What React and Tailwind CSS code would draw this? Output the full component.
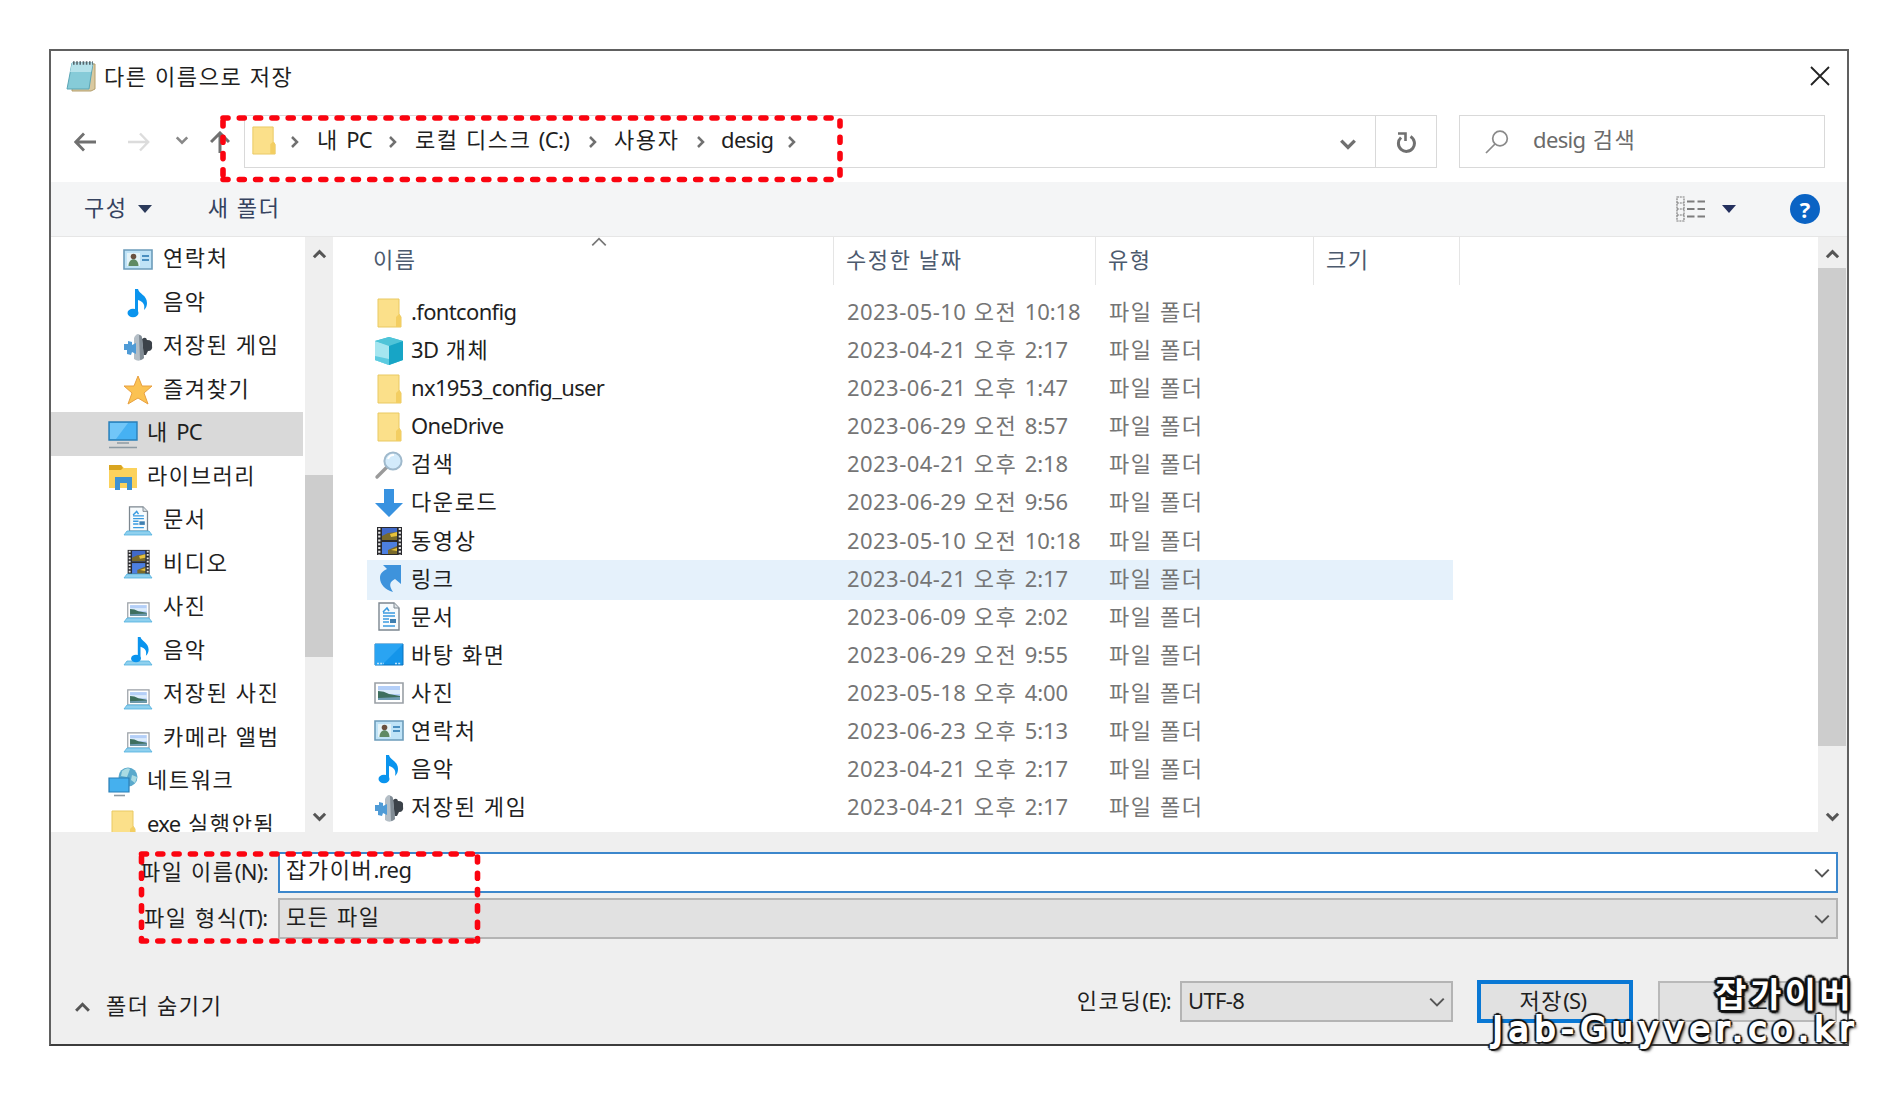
import React from 'react';

// Hangul, numbers and latin words are spaced differently in the dialog font
function Label({ children, className = '' }) {
  const runs = children.match(/[\uac00-\ud7a3 ]+|[\d:-]{3,}|[^\uac00-\ud7a3 ]+/g) || [];
  return (
    <span className={`flex items-baseline whitespace-pre text-[22px] leading-[30px] ${className}`}>
      {runs.map((run, i) => {
        let style = 'tracking-[-0.65px]';
        if (/[\uac00-\ud7a3 ]/.test(run)) style = 'tracking-[1.6px]';
        else if (/^[\d:-]+$/.test(run)) style = run.length > 6 ? 'tracking-[0.45px]' : 'tracking-[-0.1px]';
        return <span key={i} className={style}>{run}</span>;
      })}
    </span>
  );
}

function Chevron({ dir = 'down', size = 16, width = 2.5, color = '#555' }) {
  const paths = {
    down: 'M2 5l6 6 6-6',
    up: 'M2 11l6-6 6 6',
    right: 'M5 3l5 5-5 5',
  };
  return (
    <svg width={size} height={size} viewBox="0 0 16 16" fill="none" stroke={color} strokeWidth={width} className="shrink-0">
      <path d={paths[dir]} />
    </svg>
  );
}

const Laptop = () => <path d="M4 25h22l3 4H1z" fill="#8fd0ee" stroke="#4fb0de" strokeWidth="0.8" />;

const Doc = () => (
  <>
    <path d="M5 1h15l5 5v22H5z" fill="#f7fbfd" stroke="#7c8790" strokeWidth="1.4" />
    <path d="M20 1v5h5" fill="#dde3e7" stroke="#7c8790" />
    <path d="M9 10l4-4 2 3M9 11h12M9 14h12M9 17h6M9 20h6M9 24h12" stroke="#3a9be0" strokeWidth="1.6" fill="none" />
    <path d="M16 17h6v4h-6z" fill="#3f7fb0" />
  </>
);

const Film = () => (
  <>
    <path d="M3 1h25v28H3z" fill="#2a2a2e" />
    <path d="M8 2h15v12H8z" fill="#4169c8" />
    <path d="M8 16h15v12H8z" fill="#4d7fe0" />
    <path d="M8 10l6-3 9-1v8H8zM14 24l9-4v8h-9z" fill="#7a6a2a" />
    <path d="M16 8l7-2v4l-6 1zM17 24l6-2v3z" fill="#e8c23c" />
    <path d="M5.3 2v27M25.8 2v27" stroke="#e6e6e6" strokeWidth="2.2" strokeDasharray="2 1.8" />
  </>
);

const Photo = () => (
  <>
    <path d="M1 5h28v20H1z" fill="#fff" stroke="#9aa0a6" strokeWidth="1.6" />
    <path d="M4 8h22v14H4z" fill="#b4cff8" />
    <path d="M4 12h22v4H4z" fill="#dcecfb" />
    <path d="M4 13q6 0 11 3l11 2v4H4z" fill="#3e6f5e" />
    <path d="M4 20l22-1v3H4z" fill="#6f9cb4" />
  </>
);

const Note = () => (
  <>
    <ellipse cx="10" cy="25" rx="5.5" ry="4.2" fill="#0a94ee" />
    <path d="M12 1h3c1 5 9 6 9 14 0 3-1 5-3 7 1-5 0-8-6-10v13h-3z" fill="#0a94ee" />
  </>
);

const GLYPHS = {
  folder: (
    <>
      <path d="M4 1h21v15l2 3v10H4z" fill="#fbe08a" stroke="#e9c963" strokeWidth="1" />
      <path d="M25 16l2 3v10h-5V19z" fill="#f3ce62" />
    </>
  ),
  cube: (
    <>
      <path d="M15 1l14 4v19l-14 5L1 24V5z" fill="#35bdd6" />
      <path d="M1 5l14 4v20L1 24z" fill="#a5e6f0" />
      <path d="M1 20l14 3v6L1 24z" fill="#5ccbe0" />
      <path d="M15 9l14-4v19l-14 5z" fill="#17a5c6" />
      <path d="M1 5l14-4 14 4-14 5z" fill="#4fc4d8" />
    </>
  ),
  search: (
    <>
      <path d="M3 27l10-10" stroke="#9a9a9a" strokeWidth="3.4" strokeLinecap="round" />
      <circle cx="19" cy="11" r="8.6" fill="#d3ebfb" stroke="#9fb9cc" strokeWidth="2" />
      <path d="M14 9a6 6 0 0 1 6-4" stroke="#fff" strokeWidth="2" fill="none" />
    </>
  ),
  download: <path d="M10 1h10v14h9L15 29 1 15h9z" fill="#3892e0" />,
  film: <Film />,
  link: <path d="M9 1h18v19l-6-5c-6 3-6 7-2 13-8-2-13-8-13-14 0-5 3-7 7-9z" fill="#3e93dc" />,
  doc: <Doc />,
  desktop: (
    <>
      <path d="M1 4h28v21H1z" fill="#1495ea" stroke="#0b72bd" />
      <path d="M1 4h28L8 25H1z" fill="#2aa4f2" />
      <path d="M3 23.5h7M21 23.5h6" stroke="#bfe2fa" strokeWidth="1.5" strokeDasharray="2 1.2" />
    </>
  ),
  photo: <Photo />,
  contact: (
    <>
      <path d="M1 5h28v19H1z" fill="#bfe3f7" stroke="#6c9cba" strokeWidth="1.6" />
      <path d="M4 8h13v13H4z" fill="#e4f3f8" />
      <circle cx="10.5" cy="11.5" r="2.8" fill="#6a5140" />
      <path d="M5.5 21c0-9 10-9 10 0z" fill="#5f8a64" />
      <path d="M19 11h7M19 15h7" stroke="#4a8fc0" strokeWidth="1.8" />
    </>
  ),
  note: <Note />,
  game: (
    <>
      <path d="M19 7q4-3 5 1 6 0 5 5 1 6-4 6l-2 4h-6V8z" fill="#3b4249" />
      <path d="M11 6q4-8 8 0l2 20q-5 5-10 1z" fill="#b4bec6" />
      <path d="M16 3q3 0 3 3l2 20q-2 2-4 2z" fill="#808b94" />
      <path d="M1 12h4V9l4 1v3l4-2v11l-4-2-1 3-4-1v-4H1z" fill="#4f9bd6" />
    </>
  ),
  star: <path d="M15 1l4 10h10l-8 7 4 11-10-6-10 6 4-11-8-7h10z" fill="#fbc252" stroke="#e8a040" strokeWidth="1" />,
  pc: (
    <>
      <path d="M1 3h28v18H1z" fill="#46b1f3" stroke="#2a7fb8" strokeWidth="1.4" />
      <path d="M2 4h18L8 20H2z" fill="#71c6f8" />
      <path d="M9 24h12M1 28.5h28" stroke="#8d9aa3" strokeWidth="1.4" />
    </>
  ),
  library: (
    <>
      <path d="M1 3h12l3 3h13v20H1z" fill="#fbd25c" />
      <path d="M1 3h12l2 3-2 2H1z" fill="#d9a520" />
      <path d="M7 28V15h17v13h-5v-7h-7v7z" fill="#3d92d2" />
    </>
  ),
  laptopDoc: <><g transform="translate(2 0) scale(.9)"><Doc /></g><Laptop /></>,
  laptopFilm: <><g transform="translate(2 0) scale(.88)"><Film /></g><Laptop /></>,
  laptopPhoto: <><g transform="translate(4 6) scale(.76)"><Photo /></g><Laptop /></>,
  laptopNote: <><Laptop /><g transform="translate(4 0) scale(.9)"><Note /></g></>,
  network: (
    <>
      <circle cx="20" cy="10" r="9.5" fill="#5aa9cc" />
      <path d="M14 4q5-4 8-2l-3 8-6-1zM24 8l5 2-2 6-4-3z" fill="#a9dbe3" />
      <path d="M1 11h20v14H1z" fill="#45b0ee" stroke="#2b7fb6" strokeWidth="1.2" />
      <path d="M6 28.5h11" stroke="#8d9aa3" strokeWidth="1.6" />
    </>
  ),
};

function Icon({ name, size = 30, className = '' }) {
  return (
    <svg width={size} height={size} viewBox="0 0 30 30" className={`shrink-0 ${className}`}>
      {GLYPHS[name]}
    </svg>
  );
}

const TREE = [
  { icon: 'contact', label: '연락처', level: 2 },
  { icon: 'note', label: '음악', level: 2 },
  { icon: 'game', label: '저장된 게임', level: 2 },
  { icon: 'star', label: '즐겨찾기', level: 2 },
  { icon: 'pc', label: '내 PC', level: 1, selected: true },
  { icon: 'library', label: '라이브러리', level: 1 },
  { icon: 'laptopDoc', label: '문서', level: 2 },
  { icon: 'laptopFilm', label: '비디오', level: 2 },
  { icon: 'laptopPhoto', label: '사진', level: 2 },
  { icon: 'laptopNote', label: '음악', level: 2 },
  { icon: 'laptopPhoto', label: '저장된 사진', level: 2 },
  { icon: 'laptopPhoto', label: '카메라 앨범', level: 2 },
  { icon: 'network', label: '네트워크', level: 1 },
  { icon: 'folder', label: 'exe 실행안됨', level: 1 },
];

const FILES = [
  ['folder', '.fontconfig', '2023-05-10 오전 10:18'],
  ['cube', '3D 개체', '2023-04-21 오후 2:17'],
  ['folder', 'nx1953_config_user', '2023-06-21 오후 1:47'],
  ['folder', 'OneDrive', '2023-06-29 오전 8:57'],
  ['search', '검색', '2023-04-21 오후 2:18'],
  ['download', '다운로드', '2023-06-29 오전 9:56'],
  ['film', '동영상', '2023-05-10 오전 10:18'],
  ['link', '링크', '2023-04-21 오후 2:17'],
  ['doc', '문서', '2023-06-09 오후 2:02'],
  ['desktop', '바탕 화면', '2023-06-29 오전 9:55'],
  ['photo', '사진', '2023-05-18 오후 4:00'],
  ['contact', '연락처', '2023-06-23 오후 5:13'],
  ['note', '음악', '2023-04-21 오후 2:17'],
  ['game', '저장된 게임', '2023-04-21 오후 2:17'],
];

function TitleBar() {
  return (
    <div className="flex h-[50px] items-center pl-[15px] pr-[17px]">
      <svg width="30" height="32" viewBox="0 0 30 32">
        <path d="M7 4h22v25l-4 2H6z" fill="#d9c9a0" stroke="#b59f6c" />
        <path d="M6 3h21l-4 26H1z" fill="#86cbd8" stroke="#5aa5b5" />
        <path d="M6 3h21l-2 9H4z" fill="#b6e2ea" />
        <path d="M7 3h20" stroke="#55656c" strokeWidth="3.4" strokeDasharray="1.6 1.6" />
      </svg>
      <Label className="-mt-px ml-[8px]">다른 이름으로 저장</Label>
      <svg width="20" height="20" viewBox="0 0 20 20" className="ml-auto" stroke="#222" strokeWidth="1.8">
        <path d="M1 1l18 18M19 1L1 19" />
      </svg>
    </div>
  );
}

function NavBar() {
  return (
    <div className="flex h-[81px] items-center">
      <div className="flex w-[193px] items-center pl-[23px]">
        <svg width="22" height="20" viewBox="0 0 22 20" fill="none" stroke="#707070" strokeWidth="2.8">
          <path d="M22 10H2M10 1.5L1.8 10l8.2 8.5" />
        </svg>
        <svg width="22" height="20" viewBox="0 0 22 20" fill="none" stroke="#dcdcdc" strokeWidth="2.4" className="ml-8">
          <path d="M0 10h20M12 1.5l8.2 8.5-8.2 8.5" />
        </svg>
        <span className="-mt-1 ml-[25px] flex"><Chevron size={14} color="#888" width={3} /></span>
        <svg width="20" height="22" viewBox="0 0 20 22" fill="none" stroke="#707070" strokeWidth="3" className="ml-[21px]">
          <path d="M10 22V2M1 11l9-9 9 9" />
        </svg>
      </div>
      <div className="flex h-[53px] w-[1193px] border border-[#d9d9d9]">
        <div className="flex flex-1 items-center pl-[6px]">
          <Icon name="folder" size={29} className="-ml-[2px] -mt-[3px] mr-[9px]" />
          <Chevron dir="right" size={16} color="#707070" />
          <Label className="-mt-[5px] ml-[14px] w-[68px]">내 PC</Label>
          <Chevron dir="right" size={16} color="#707070" />
          <Label className="-mt-[5px] ml-[14px] w-[170px]">로컬 디스크 (C:)</Label>
          <Chevron dir="right" size={16} color="#707070" />
          <Label className="-mt-[5px] ml-[13px] w-[79px]">사용자</Label>
          <Chevron dir="right" size={16} color="#707070" />
          <Label className="-mt-[5px] ml-[12px] w-[63px]">desig</Label>
          <Chevron dir="right" size={16} color="#707070" />
          <span className="ml-auto mr-[18px] mt-1 flex"><Chevron size={18} width={3} color="#707070" /></span>
        </div>
        <div className="flex w-[61px] items-center justify-center border-l border-[#d9d9d9]">
          <svg width="20" height="22" viewBox="0 0 20 22" fill="none" stroke="#707070" strokeWidth="3">
            <path d="M14.5 5.5a8 8 0 1 1-9.5 1" />
            <path d="M2 2.5h7.5V10" strokeWidth="2.6" />
          </svg>
        </div>
      </div>
      <div className="ml-[22px] flex h-[53px] w-[366px] items-center border border-[#d9d9d9] pl-[25px]">
        <svg width="24" height="24" viewBox="0 0 24 24" fill="none" stroke="#8a8a8a" strokeWidth="1.7">
          <circle cx="15" cy="8.5" r="7.3" />
          <path d="M10 14L1 23" />
        </svg>
        <Label className="-mt-[5px] ml-6 text-[#6b6b6b]">desig 검색</Label>
      </div>
    </div>
  );
}

function Toolbar() {
  return (
    <div className="flex h-[55px] items-center border-b border-[#e6e6e6] bg-[#f4f5f6] pl-[33px] pr-[27px] text-[#36435f]">
      <Label className="-mt-[5px]">구성</Label>
      <svg width="14" height="8" viewBox="0 0 14 8" className="ml-[10px]" fill="#2b3a5a"><path d="M0 0h14L7 8z" /></svg>
      <Label className="-mt-[5px] ml-[56px]">새 폴더</Label>
      <svg width="30" height="26" viewBox="0 0 30 26" className="ml-auto" fill="none" stroke="#7d7d7d">
        <path d="M1 1h7v24H1zM1 7h7M1 13h7M1 19h7" strokeWidth="1.2" strokeDasharray="2 .8" />
        <path d="M11 5.5h18M11 13h18M11 20.5h18" strokeWidth="2" strokeDasharray="7.5 3" />
      </svg>
      <svg width="14" height="8" viewBox="0 0 14 8" className="ml-4" fill="#24305e"><path d="M0 0h14L7 8z" /></svg>
      <span className="ml-[54px] flex h-[30px] w-[30px] items-center justify-center rounded-full bg-[#0a63c4] font-['Open_Sans'] text-[22px] font-bold leading-none text-white">
        ?
      </span>
    </div>
  );
}

function ScrollBar({ before, thumb }) {
  return (
    <div className="flex w-7 shrink-0 flex-col items-center bg-[#efefef]">
      <div className="flex h-[31px] shrink-0 items-center pt-[3px]"><Chevron dir="up" size={15} width={3.2} /></div>
      <div className="w-full shrink-0 bg-[#cdcdcd]" style={{ marginTop: before, height: thumb }} />
      <div className="mt-auto flex h-[31px] items-center"><Chevron size={15} width={3.2} /></div>
    </div>
  );
}

function Tree() {
  return (
    <div className="h-full w-[252px] shrink-0 overflow-hidden pt-px">
      {TREE.map((item, i) => (
        <div
          key={i}
          className={`flex h-[43.5px] items-center ${item.level === 2 ? 'pl-[72px]' : 'pl-[57px]'} ${item.selected ? 'bg-[#d9d9d9]' : ''}`}
        >
          <Icon name={item.icon} />
          <Label className={`-mt-[5px] ${item.level === 2 ? 'ml-[10px]' : 'ml-[9px]'}`}>{item.label}</Label>
        </div>
      ))}
    </div>
  );
}

function FileList() {
  return (
    <div className="flex-1 pl-[34px]">
      <div className="flex h-12 items-stretch text-[#4c5a6e]">
        <div className="relative flex w-[467px] items-center border-r border-[#e5e5e5] pl-[6px]">
          <Label className="-mt-1">이름</Label>
          <span className="absolute left-[223px] -top-[4px]"><Chevron dir="up" size={18} width={1.5} color="#777" /></span>
        </div>
        <div className="flex w-[262px] items-center border-r border-[#e5e5e5] pl-3"><Label className="-mt-1">수정한 날짜</Label></div>
        <div className="flex w-[218px] items-center border-r border-[#e5e5e5] pl-3"><Label className="-mt-1">유형</Label></div>
        <div className="flex w-[146px] items-center border-r border-[#e5e5e5] pl-3"><Label className="-mt-1">크기</Label></div>
      </div>
      <div className="pt-[9px]">
        {FILES.map(([icon, name, date]) => (
          <div
            key={name}
            className={`flex w-[1086px] items-center pl-[7px] ${name === '링크' ? '-my-px h-[40.08px] bg-[#e5f1fb]' : 'h-[38.08px]'}`}
          >
            <Icon name={icon} className="-mt-px" />
            <Label className="-mt-[4px] ml-[7px] w-[436px]">{name}</Label>
            <Label className="-mt-[4px] w-[262px] text-[#757575]">{date}</Label>
            <Label className="-mt-[4px] text-[#757575]">파일 폴더</Label>
          </div>
        ))}
      </div>
    </div>
  );
}

function Footer() {
  return (
    <div className="flex-1 bg-[#efefef] pt-5">
      <div className="flex h-[41px] items-center pl-[89px]">
        <Label className="-mt-1 w-[138px]">파일 이름(N):</Label>
        <div className="flex h-[41px] w-[1560px] items-center border-2 border-[#3c87cc] bg-white pl-[6px] pr-[5px]">
          <Label className="-mt-[7px]">잡가이버.reg</Label>
          <span className="ml-auto"><Chevron size={18} width={1.8} /></span>
        </div>
      </div>
      <div className="mt-[5px] flex h-[41px] items-center pl-[93px]">
        <Label className="-mt-1 w-[134px]">파일 형식(T):</Label>
        <div className="flex h-[41px] w-[1560px] items-center border-2 border-[#b4b4b4] bg-[#e1e1e1] pl-[6px] pr-[5px]">
          <Label className="-mt-[6px]">모든 파일</Label>
          <span className="ml-auto"><Chevron size={18} width={1.8} /></span>
        </div>
      </div>
      <div className="mt-[41px] flex h-[43px] items-center pl-[23px]">
        <span className="mt-3"><Chevron dir="up" size={17} width={2.8} /></span>
        <Label className="ml-[15px] mt-[6px]">폴더 숨기기</Label>
        <Label className="-mt-1 ml-auto mr-[9px]">인코딩(E):</Label>
        <div className="flex h-[41px] w-[273px] items-center border-2 border-[#b4b4b4] bg-[#e1e1e1] pl-[6px] pr-[5px]">
          <Label className="-mt-1">UTF-8</Label>
          <span className="ml-auto"><Chevron size={18} width={1.8} /></span>
        </div>
        <div className="ml-6 flex h-[43px] w-[156px] items-center justify-center border-4 border-[#0a78d4] bg-[#e1e1e1] pr-1">
          <Label className="-mt-1">저장(S)</Label>
        </div>
        <div className="ml-[25px] mr-[10px] flex h-[41px] w-[179px] items-center justify-center border-2 border-[#b9b9b9] bg-[#e1e1e1]">
          <Label className="-mt-1">취소</Label>
        </div>
      </div>
    </div>
  );
}

function Marker({ x, y, w, h }) {
  return (
    <path
      d={`M${x} ${y}h${w}M${x + w} ${y + 3}v${h - 3}M${x} ${y + h}h${w}M${x} ${y + 3}v${h - 3}`}
      fill="none" stroke="#fb0410" strokeWidth="5.6" strokeLinecap="round" strokeDasharray="5 11.3"
    />
  );
}

export default function App() {
  return (
    <div className="relative h-[1096px] w-[1898px] overflow-hidden bg-white pl-[49px] pt-[49px] font-['Noto_Sans','Noto_Sans_CJK_KR',sans-serif] text-[#1f1f1f]">
      <div className="flex h-[997px] w-[1800px] flex-col border-2 border-[#606060] border-b-[#3c3c3c] bg-white">
        <TitleBar />
        <NavBar />
        <Toolbar />
        <div className="flex h-[595px] shrink-0">
          <Tree />
          <div className="w-[2px]" />
          <ScrollBar before={207} thumb={182} />
          <FileList />
          <ScrollBar before={0} thumb={478} />
          <div className="w-px bg-[#efefef]" />
        </div>
        <Footer />
      </div>

      <svg width="1898" height="1096" className="pointer-events-none absolute left-0 top-0">
        <Marker x={223} y={118} w={617} h={61.5} />
        <Marker x={141.5} y={854} w={336} h={87} />
      </svg>

      <div className="absolute right-[43px] top-[974px] flex flex-col items-end whitespace-nowrap text-white [text-shadow:3px_0_1px_#111,-3px_0_1px_#111,0_3px_1px_#111,0_-3px_1px_#111,2px_2px_1px_#111,-2px_-2px_1px_#111,2px_-2px_1px_#111,-2px_2px_1px_#111,3px_3px_3px_#333]">
        <span className="mr-[1px] font-['Noto_Sans_CJK_KR'] text-[34px] font-bold leading-[38px] tracking-[3.4px]">잡가이버</span>
        <span className="-mr-[4px] font-['DejaVu_Sans'] text-[33px] leading-[36px] tracking-[5.9px] [-webkit-text-stroke:2.2px_#fff]">Jab-Guyver.co.kr</span>
      </div>
    </div>
  );
}
